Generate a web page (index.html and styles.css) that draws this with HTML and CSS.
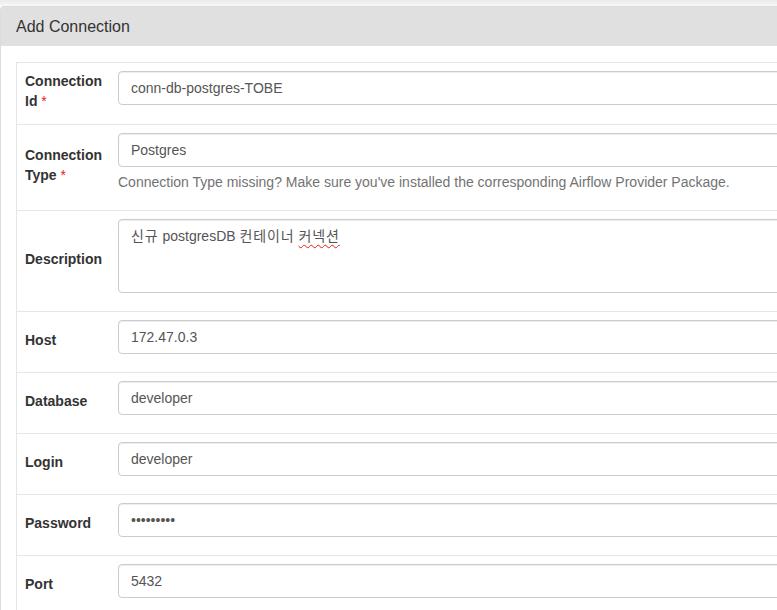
FILE: index.html
```html
<!DOCTYPE html>
<html lang="en">
<head>
<meta charset="utf-8">
<title>Add Connection</title>
<link rel="stylesheet" href="styles.css">
</head>
<body>
<div class="topbar"></div>
<div class="panel">
  <div class="panel-heading">Add Connection</div>
  <div class="panel-body">
    <table class="form-table">
      <tr class="first">
        <td class="label">Connection Id <span class="req">*</span></td>
        <td class="field"><input class="control" type="text" value="conn-db-postgres-TOBE"><div class="help-empty"></div></td>
      </tr>
      <tr>
        <td class="label">Connection Type <span class="req">*</span></td>
        <td class="field"><input class="control" type="text" value="Postgres"><p class="help">Connection Type missing? Make sure you've installed the corresponding Airflow Provider Package.</p></td>
      </tr>
      <tr>
        <td class="label">Description</td>
        <td class="field"><div class="control textarea"><span class="ko">신규</span> postgresDB <span class="ko">컨테이너</span> <span class="ko misspelled">커넥션</span></div><div class="help-empty"></div></td>
      </tr>
      <tr>
        <td class="label">Host</td>
        <td class="field"><input class="control" type="text" value="172.47.0.3"><div class="help-empty"></div></td>
      </tr>
      <tr>
        <td class="label">Database</td>
        <td class="field"><input class="control" type="text" value="developer"><div class="help-empty"></div></td>
      </tr>
      <tr>
        <td class="label">Login</td>
        <td class="field"><input class="control" type="text" value="developer"><div class="help-empty"></div></td>
      </tr>
      <tr>
        <td class="label">Password</td>
        <td class="field"><input class="control" type="password" value="developer"><div class="help-empty"></div></td>
      </tr>
      <tr>
        <td class="label">Port</td>
        <td class="field"><input class="control" type="text" value="5432"><div class="help-empty"></div></td>
      </tr>
    </table>
  </div>
</div>
</body>
</html>
```

FILE: styles.css
```css
html, body {
  margin: 0;
  padding: 0;
  overflow: hidden;
  background: #fff;
}
body {
  font-family: "Liberation Sans", Arial, "Noto Sans CJK KR", sans-serif;
  font-size: 14px;
  line-height: 20px;
  color: #333;
}
.topbar {
  height: 6px;
  background: linear-gradient(#ebebeb, #f7f7f7);
}
.panel {
  width: 1100px;
  border: 1px solid #dcdcdc;
  border-bottom: 0;
  border-radius: 4px 4px 0 0;
  background: #fff;
}
.panel-heading {
  height: 39px;
  line-height: 39px;
  padding: 0 15px;
  font-size: 16px;
  color: #333;
  background: #e0e0e0;
  border-radius: 3px 3px 0 0;
}
.panel-body {
  padding: 16px 15px 0 15px;
}
.form-table {
  width: 100%;
  border-collapse: collapse;
  table-layout: fixed;
  border-left: 1px solid #e6e6e6;
  border-top: 1px solid #e6e6e6;
}
.form-table td {
  border-bottom: 1px solid #e6e6e6;
  padding: 8px;
}
.form-table td.field {
  vertical-align: top;
}
.form-table .first td.field {
  padding-bottom: 9px;
}
.form-table td.label {
  width: 77px;
  padding-bottom: 13px;
  vertical-align: middle;
  font-weight: bold;
  color: #333;
}
.req {
  color: #e8191b;
  font-weight: normal;
}
.control {
  display: block;
  box-sizing: border-box;
  width: 100%;
  height: 34px;
  margin: 0;
  padding: 6px 12px;
  font-family: "Liberation Sans", Arial, "Noto Sans CJK KR", sans-serif;
  font-size: 14px;
  line-height: 20px;
  color: #555;
  background: #fff;
  border: 1px solid #ccc;
  border-radius: 4px;
  box-shadow: inset 0 1px 1px rgba(0, 0, 0, 0.075);
}
.textarea {
  height: 74px;
}
.ko {
  letter-spacing: 0.9px;
}
.misspelled {
  text-decoration: underline wavy #e02020;
  text-decoration-thickness: 1px;
  text-underline-offset: 3px;
}
.help-empty {
  height: 10px;
}
.help {
  margin: 5px 0 10px 0;
  line-height: 20px;
  color: #737373;
}
```
